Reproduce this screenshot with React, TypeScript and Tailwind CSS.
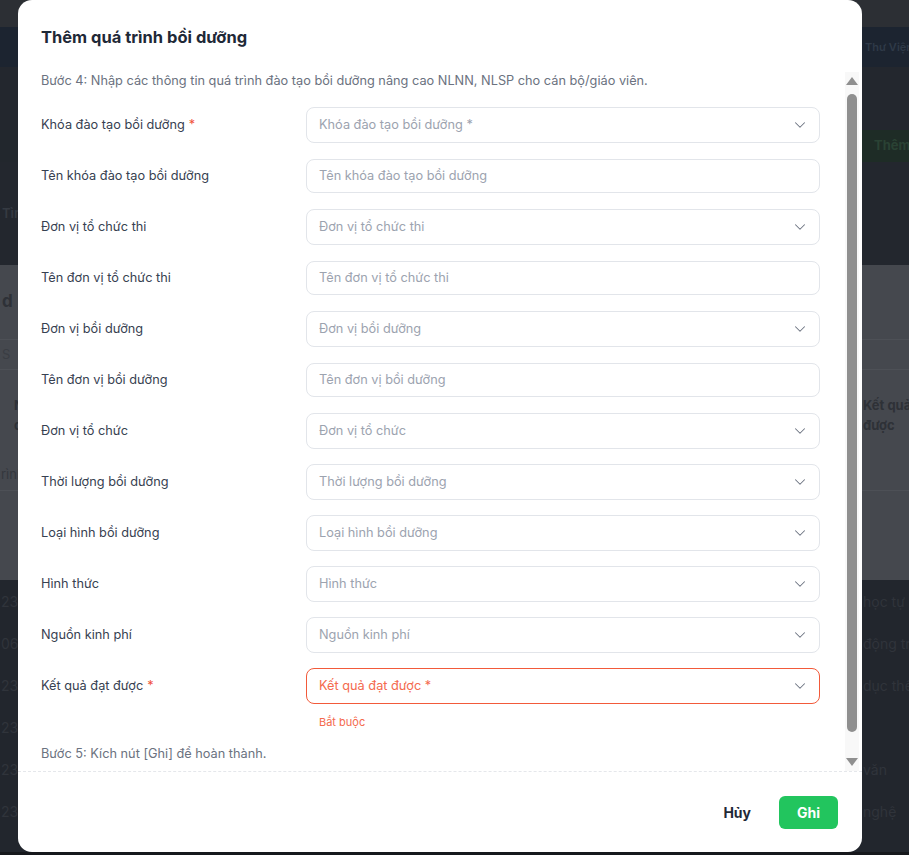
import { ChevronDown } from "lucide-react";

type Field = {
  label: string;
  placeholder: string;
  select: boolean;
  required?: boolean;
  error?: string;
};

const fields: Field[] = [
  { label: "Khóa đào tạo bồi dưỡng", placeholder: "Khóa đào tạo bồi dưỡng *", select: true, required: true },
  { label: "Tên khóa đào tạo bồi dưỡng", placeholder: "Tên khóa đào tạo bồi dưỡng", select: false },
  { label: "Đơn vị tổ chức thi", placeholder: "Đơn vị tổ chức thi", select: true },
  { label: "Tên đơn vị tổ chức thi", placeholder: "Tên đơn vị tổ chức thi", select: false },
  { label: "Đơn vị bồi dưỡng", placeholder: "Đơn vị bồi dưỡng", select: true },
  { label: "Tên đơn vị bồi dưỡng", placeholder: "Tên đơn vị bồi dưỡng", select: false },
  { label: "Đơn vị tổ chức", placeholder: "Đơn vị tổ chức", select: true },
  { label: "Thời lượng bồi dưỡng", placeholder: "Thời lượng bồi dưỡng", select: true },
  { label: "Loại hình bồi dưỡng", placeholder: "Loại hình bồi dưỡng", select: true },
  { label: "Hình thức", placeholder: "Hình thức", select: true },
  { label: "Nguồn kinh phí", placeholder: "Nguồn kinh phí", select: true },
  { label: "Kết quả đạt được", placeholder: "Kết quả đạt được *", select: true, required: true, error: "Bắt buộc" },
];

// dimmed rows of the list page behind the dialog
const tableRows = [
  { left: "23", right: "học tự" },
  { left: "06", right: "động tr" },
  { left: "23", right: "dục thể" },
  { left: "23", right: "" },
  { left: "23", right: "văn" },
  { left: "23", right: "nghệ" },
];

function Backdrop() {
  return (
    <div className="flex h-full flex-col text-[13px]">
      <div className="h-[27px] bg-[#2c2f34]" />
      <div className="flex h-[40px] items-center justify-end bg-[#1c2430] text-[11px] font-semibold text-[#2f3a48]">
        <span className="w-[44px] whitespace-nowrap">Thư Viện</span>
      </div>
      <div className="h-[63px] bg-[#23272e]" />
      <div className="flex h-[32px] items-center justify-end bg-[#22272d]">
        <div className="flex h-full w-[47px] items-center bg-[#1e2c26] pl-[12px] text-[13px] font-bold text-[#2a4234]">
          Thêm
        </div>
      </div>
      <div className="flex h-[103px] items-center bg-[#23272e] text-[#353a42]">
        <span className="whitespace-nowrap pl-[2px] font-semibold">Tìm</span>
      </div>
      <div className="flex h-[315px] flex-col bg-[#45484e] text-[#2e3137]">
        <div className="flex h-[75px] items-center border-b border-[#4d5056]">
          <span className="pl-[2px] text-[17px] font-bold">d</span>
        </div>
        <div className="flex h-[30px] items-center gap-3 border-b border-[#4d5056] pl-[2px] text-[#3a3d43]">
          <span>S</span>
        </div>
        <div className="flex h-[90px] items-center justify-between">
          <div className="flex flex-col pl-[14px] font-bold leading-5">
            <span>N</span>
            <span>c</span>
          </div>
          <div className="flex w-[46px] flex-col whitespace-nowrap font-bold leading-5">
            <span>Kết quả</span>
            <span>được</span>
          </div>
        </div>
        <div className="flex h-[30px] items-center">
          <span className="pl-[1px] text-[#34373d]">rình</span>
        </div>
        <div className="flex-1 border-t border-[#4d5056]" />
      </div>
      <div className="flex flex-1 flex-col bg-[#22262d] text-[14px] text-[#30343b]">
        {tableRows.map((row, i) => (
          <div key={i} className="flex h-[42px] items-center justify-between">
            <span className="pl-[1px]">{row.left}</span>
            <span className="w-[46px] whitespace-nowrap">{row.right}</span>
          </div>
        ))}
      </div>
      <div className="h-[3px] bg-[#16181c]" />
    </div>
  );
}

function FieldRow({ field }: { field: Field }) {
  const hasError = Boolean(field.error);
  return (
    <div className="mb-[15px] grid grid-cols-[265px_1fr]">
      <div className="flex h-9 items-center text-[12.75px] text-[#374151]">
        {field.label}
        {field.required ? <span className="ml-1 text-[#f0503a]">*</span> : null}
      </div>
      <div>
        <div className="flex h-9 items-center">
          <div
            className={`flex w-full items-center justify-between rounded-lg border bg-white pl-[12px] pr-[10px] text-[12.75px] ${
              field.select ? "h-9" : "h-[34px]"
            } ${hasError ? "border-[#f25a3a] text-[#f46a4e]" : "border-[#e2e5ea] text-[#9ca3af]"}`}
          >
            <span>{field.placeholder}</span>
            {field.select ? <ChevronDown size={18} strokeWidth={1.4} className="text-[#6b7280]" /> : null}
          </div>
        </div>
        {hasError ? (
          <p className="mt-[10px] pl-[13px] text-[11px] text-[#f46a4e]">{field.error}</p>
        ) : null}
      </div>
    </div>
  );
}

function Scrollbar() {
  return (
    <div className="flex w-[14px] flex-col items-center bg-[#f8f8f8] py-[5px]">
      <div className="h-0 w-0 border-x-[6px] border-b-[8px] border-x-transparent border-b-[#8f8f8f]" />
      <div className="mt-[9px] h-[638px] w-[10px] rounded-full bg-[#8f8f8f]" />
      <div className="flex-1" />
      <div className="h-0 w-0 border-x-[6px] border-t-[8px] border-x-transparent border-t-[#8f8f8f]" />
    </div>
  );
}

export default function App() {
  return (
    <div className="relative h-[855px] w-full overflow-hidden bg-[#22262d] font-['Inter',sans-serif]">
      <Backdrop />

      <div className="absolute left-[18px] top-0 flex h-[852px] w-[844px] flex-col rounded-[14px] bg-white">
        <div className="px-[23px] pb-[21px] pt-[23px]">
          <h2 className="text-[16.5px] font-bold leading-7 text-[#1f2937]">Thêm quá trình bồi dưỡng</h2>
        </div>

        <div className="flex min-h-0 flex-1 pr-[3px]">
          <div className="flex-1 overflow-hidden pl-[23px] pr-[25px]">
            <p className="mb-[17px] text-[12.75px] leading-[18px] text-[#6b7280]">
              Bước 4: Nhập các thông tin quá trình đào tạo bồi dưỡng nâng cao NLNN, NLSP cho cán bộ/giáo viên.
            </p>
            {fields.map((field) => (
              <FieldRow key={field.label} field={field} />
            ))}
            <p className="-mt-[1px] text-[12.75px] leading-[18px] text-[#6b7280]">Bước 5: Kích nút [Ghi] để hoàn thành.</p>
          </div>
          <Scrollbar />
        </div>

        <div className="border-t border-dashed border-[#e5e7eb]" />

        <div className="flex h-[80px] items-center justify-end gap-[12px] pr-[24px]">
          <button className="h-[33px] px-4 text-[14px] font-bold text-[#1f2937]">Hủy</button>
          <button className="h-[33px] w-[59px] rounded-md bg-[#22c55e] text-[14px] font-bold text-white">Ghi</button>
        </div>
      </div>
    </div>
  );
}
